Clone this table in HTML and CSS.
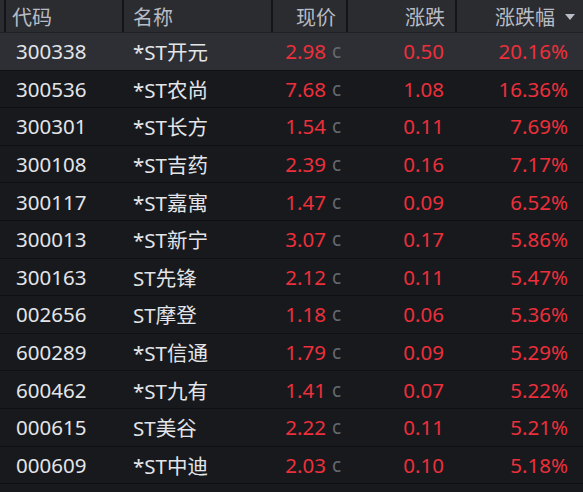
FILE: index.html
```html
<!DOCTYPE html>
<html lang="zh-CN">
<head>
<meta charset="utf-8">
<title>涨跌幅排行</title>
<link rel="stylesheet" href="styles.css">
</head>
<body>
<div class="table">
  <div class="row head">
    <div class="cell code">代码</div>
    <div class="cell name">名称</div>
    <div class="cell price">现价</div>
    <div class="cell chg">涨跌</div>
    <div class="cell pct">涨跌幅<span class="sort"></span></div>
  </div>
  <div class="row active">
    <div class="cell code">300338</div><div class="cell name">*ST开元</div>
    <div class="cell price"><span class="up">2.98</span><span class="c">c</span></div>
    <div class="cell chg up">0.50</div><div class="cell pct up">20.16%</div>
  </div>
  <div class="row">
    <div class="cell code">300536</div><div class="cell name">*ST农尚</div>
    <div class="cell price"><span class="up">7.68</span><span class="c">c</span></div>
    <div class="cell chg up">1.08</div><div class="cell pct up">16.36%</div>
  </div>
  <div class="row">
    <div class="cell code">300301</div><div class="cell name">*ST长方</div>
    <div class="cell price"><span class="up">1.54</span><span class="c">c</span></div>
    <div class="cell chg up">0.11</div><div class="cell pct up">7.69%</div>
  </div>
  <div class="row">
    <div class="cell code">300108</div><div class="cell name">*ST吉药</div>
    <div class="cell price"><span class="up">2.39</span><span class="c">c</span></div>
    <div class="cell chg up">0.16</div><div class="cell pct up">7.17%</div>
  </div>
  <div class="row">
    <div class="cell code">300117</div><div class="cell name">*ST嘉寓</div>
    <div class="cell price"><span class="up">1.47</span><span class="c">c</span></div>
    <div class="cell chg up">0.09</div><div class="cell pct up">6.52%</div>
  </div>
  <div class="row">
    <div class="cell code">300013</div><div class="cell name">*ST新宁</div>
    <div class="cell price"><span class="up">3.07</span><span class="c">c</span></div>
    <div class="cell chg up">0.17</div><div class="cell pct up">5.86%</div>
  </div>
  <div class="row">
    <div class="cell code">300163</div><div class="cell name">ST先锋</div>
    <div class="cell price"><span class="up">2.12</span><span class="c">c</span></div>
    <div class="cell chg up">0.11</div><div class="cell pct up">5.47%</div>
  </div>
  <div class="row">
    <div class="cell code">002656</div><div class="cell name">ST摩登</div>
    <div class="cell price"><span class="up">1.18</span><span class="c">c</span></div>
    <div class="cell chg up">0.06</div><div class="cell pct up">5.36%</div>
  </div>
  <div class="row">
    <div class="cell code">600289</div><div class="cell name">*ST信通</div>
    <div class="cell price"><span class="up">1.79</span><span class="c">c</span></div>
    <div class="cell chg up">0.09</div><div class="cell pct up">5.29%</div>
  </div>
  <div class="row">
    <div class="cell code">600462</div><div class="cell name">*ST九有</div>
    <div class="cell price"><span class="up">1.41</span><span class="c">c</span></div>
    <div class="cell chg up">0.07</div><div class="cell pct up">5.22%</div>
  </div>
  <div class="row">
    <div class="cell code">000615</div><div class="cell name">ST美谷</div>
    <div class="cell price"><span class="up">2.22</span><span class="c">c</span></div>
    <div class="cell chg up">0.11</div><div class="cell pct up">5.21%</div>
  </div>
  <div class="row">
    <div class="cell code">000609</div><div class="cell name">*ST中迪</div>
    <div class="cell price"><span class="up">2.03</span><span class="c">c</span></div>
    <div class="cell chg up">0.10</div><div class="cell pct up">5.18%</div>
  </div>
</div>
</body>
</html>
```
FILE: styles.css
```css
html, body {
  margin: 0;
  padding: 0;
  background: #17191d;
}
body {
  width: 583px;
  height: 492px;
  overflow: hidden;
  font-family: "Noto Sans", "Noto Sans CJK SC", sans-serif;
  font-size: 20.5px;
  color: #e3e5e9;
}
.table {
  display: flex;
  flex-direction: column;
}
.row {
  display: grid;
  grid-template-columns: 122px 149px 75px 109px 128px;
  height: 37.6px;
  align-items: center;
  box-sizing: border-box;
  border-bottom: 1px solid #0f1013;
}
.row.head {
  height: 33px;
  background: #2b2c30;
  color: #b7bcc6;
  font-size: 20px;
  border-bottom: 1px solid #1f2023;
  align-items: stretch;
}
.row.active {
  background: #2e2f34;
}
.cell {
  white-space: nowrap;
  display: flex;
  align-items: center;
}
.head .cell {
  border-left: 2px solid #141518;
  box-sizing: border-box;
}
.head .code {
  margin-left: 4px;
  padding-left: 6px;
}
.head .name { padding-left: 9px; }
.head .price { padding-right: 10px; }
.head .chg { padding-right: 10px; }
.head .pct { padding-right: 8px; }
.code { padding-left: 16px; }
.name { padding-left: 11px; }
.price, .chg, .pct { justify-content: flex-end; }
.price { padding-right: 5px; }
.chg { padding-right: 11px; }
.pct { padding-right: 15px; }
.up { color: #ed2f3b; }
.c {
  color: #65696f;
  font-size: 19px;
  margin-left: 6px;
}
.sort {
  width: 0;
  height: 0;
  border-left: 5px solid transparent;
  border-right: 5px solid transparent;
  border-top: 6px solid #b7bcc6;
  margin-left: 10px;
  margin-top: 2px;
}
```
